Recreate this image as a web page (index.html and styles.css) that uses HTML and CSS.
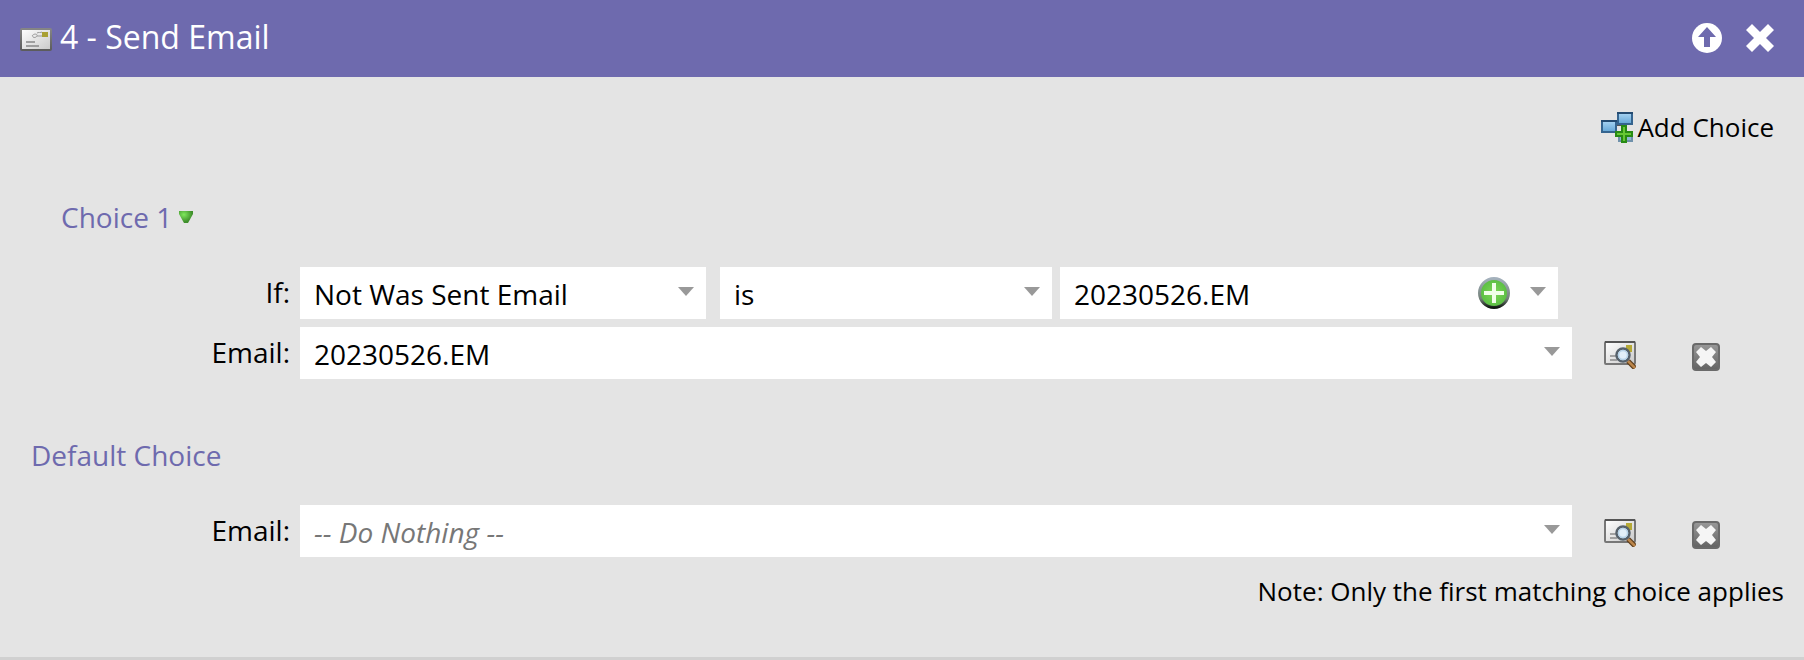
FILE: index.html
```html
<!DOCTYPE html>
<html lang="en">
<head>
  <meta charset="UTF-8" />
  <meta name="viewport" content="width=device-width, initial-scale=1.0"/>
  <title>Send Email</title>
  <link rel="stylesheet" href="styles.css">
</head>

<body>
  <!-- shared icons -->
  <svg class="defs" aria-hidden="true">
    <defs>
      <linearGradient id="paper" x1="0" y1="0" x2="1" y2="1">
        <stop offset="0" stop-color="#ffffff"/>
        <stop offset="1" stop-color="#c9c9c9"/>
      </linearGradient>
      <linearGradient id="frame" x1="0" y1="0" x2="0" y2="1">
        <stop offset="0" stop-color="#858585"/>
        <stop offset="1" stop-color="#5c5c5c"/>
      </linearGradient>
      <linearGradient id="steel" x1="0" y1="0" x2="0" y2="1">
        <stop offset="0" stop-color="#a4b1bc"/>
        <stop offset="0.7" stop-color="#738078"/>
        <stop offset="1" stop-color="#101810"/>
      </linearGradient>
      <linearGradient id="blue" x1="0" y1="0" x2="0" y2="1">
        <stop offset="0" stop-color="#a8d4f2"/>
        <stop offset="1" stop-color="#62a5d6"/>
      </linearGradient>
      <linearGradient id="box" x1="0" y1="0" x2="0" y2="1">
        <stop offset="0" stop-color="#999999"/>
        <stop offset="1" stop-color="#626262"/>
      </linearGradient>
      <radialGradient id="green" cx="0.5" cy="0.5" r="0.5">
        <stop offset="0" stop-color="#7fd757"/>
        <stop offset="1" stop-color="#58bd42"/>
      </radialGradient>
      <radialGradient id="gem" cx="0.35" cy="0.3" r="0.6">
        <stop offset="0" stop-color="#7fe85c"/>
        <stop offset="1" stop-color="#3f8f2b"/>
      </radialGradient>
    </defs>
    <symbol id="preview" viewBox="0 0 32 28">
      <rect x="1" y="1" width="30" height="22" rx="1" fill="url(#paper)" stroke="#777777" stroke-width="2"/>
      <path d="M1 1h30" stroke="#555555" stroke-width="2"/>
      <path d="M6 15h8M6 19h7" stroke="#8b8b8b" stroke-width="1.5"/>
      <rect x="22" y="4" width="6" height="7" fill="#b5a936"/>
      <path d="M24 20l7 7" stroke="#5c3d1c" stroke-width="5"/>
      <path d="M24 20l7 7" stroke="#bb854a" stroke-width="2.5"/>
      <circle cx="19" cy="14" r="6.5" fill="#e2eff9" stroke="#56616b" stroke-width="2.5"/>
      <circle cx="19" cy="14" r="4.5" fill="none" stroke="#b6d2e8" stroke-width="1.5"/>
    </symbol>
    <symbol id="remove" viewBox="0 0 28 28">
      <rect x="1" y="1" width="26" height="26" rx="3" fill="url(#box)" stroke="#6a6a6a" stroke-width="2"/>
      <path d="M4 9l5-5 5 4 5-4 5 5-4 5 4 5-5 5-5-4-5 4-5-5 4-5z" fill="#f5f5f5"/>
    </symbol>
    <symbol id="arrow" viewBox="0 0 16 9">
      <path d="M0 0h16L8 9z" fill="#999999"/>
    </symbol>
  </svg>

  <header class="titlebar">
    <svg class="mail" viewBox="0 0 32 24">
      <rect x="1" y="1" width="30" height="21" rx="1" fill="url(#paper)" stroke="url(#frame)" stroke-width="2"/>
      <rect x="22" y="4" width="6" height="5" fill="#a9a033"/>
      <path d="M12 8c2-3 6-2 5 0s-5 2-4 0M17 5c1-1 4 0 5-1M17 8h5" fill="none" stroke="#999999"/>
      <path d="M6 14h9M6 18h13" stroke="#888888" stroke-width="1.5"/>
    </svg>
    <h1>4 - Send Email</h1>
    <button type="button" class="icon-btn up" aria-label="Move up">
      <svg width="30" height="30" viewBox="0 0 30 30">
        <circle cx="15" cy="15" r="15" fill="#ffffff"/>
        <path d="M15 4l9 10h-6v10h-6V14H6z" fill="#6e6aae"/>
      </svg>
    </button>
    <button type="button" class="icon-btn" aria-label="Close">
      <svg width="28" height="28" viewBox="0 0 28 28">
        <path d="M0 6l6-6 8 8 8-8 6 6-8 8 8 8-6 6-8-8-8 8-6-6 8-8z" fill="#ffffff"/>
      </svg>
    </button>
  </header>

  <main class="step">
    <button type="button" class="add-choice">
      <svg width="32" height="32" viewBox="0 0 32 32">
        <rect x="18" y="21" width="13" height="9" fill="#8cb7d4" stroke="#6f91ab" stroke-width="2"/>
        <path d="M14 14h6" stroke="#555555" stroke-width="2"/>
        <rect x="17" y="2" width="14" height="11" fill="url(#blue)" stroke="#35648f" stroke-width="2"/>
        <rect x="1" y="10" width="14" height="11" fill="url(#blue)" stroke="#35648f" stroke-width="2"/>
        <path d="M16 2h16M0 10h16" stroke="#234a70" stroke-width="2"/>
        <path d="M20 14h6v6h6v6h-6v6h-6v-6h-6v-6h6z" fill="#278a14"/>
        <path d="M23 16v14M16 23h14" stroke="#66c834" stroke-width="2"/>
      </svg>
      Add Choice
    </button>

    <section class="choice">
      <h2 class="indent">
        <button type="button" class="choice-menu">Choice 1
          <svg width="14" height="12" viewBox="0 0 14 12"><path d="M0 0h14v3L9 12H5L0 3z" fill="url(#gem)"/></svg>
        </button>
      </h2>
      <div class="row">
        <label for="filter">If:</label>
        <div class="condition">
          <div class="field filter">
            <select id="filter"><option>Not Was Sent Email</option></select>
            <svg class="arrow"><use href="#arrow"/></svg>
          </div>
          <div class="field operator">
            <select aria-label="Operator"><option>is</option></select>
            <svg class="arrow"><use href="#arrow"/></svg>
          </div>
          <div class="field value">
            <select aria-label="Value"><option>20230526.EM</option></select>
            <button type="button" class="icon-btn plus" aria-label="Add value">
              <svg width="32" height="32" viewBox="0 0 32 32">
                <circle cx="16" cy="16" r="14.5" fill="url(#green)" stroke="url(#steel)" stroke-width="3"/>
                <path d="M16 6v20M6 16h20" stroke="#f1ffe9" stroke-width="4"/>
              </svg>
            </button>
            <svg class="arrow"><use href="#arrow"/></svg>
          </div>
        </div>
      </div>
      <div class="row">
        <label for="email1">Email:</label>
        <div class="field">
          <select id="email1"><option>20230526.EM</option></select>
          <svg class="arrow"><use href="#arrow"/></svg>
        </div>
        <div class="actions">
          <button type="button" class="icon-btn" aria-label="Preview email"><svg width="32" height="28"><use href="#preview"/></svg></button>
          <button type="button" class="icon-btn remove" aria-label="Remove email"><svg width="28" height="28"><use href="#remove"/></svg></button>
        </div>
      </div>
    </section>

    <section class="choice default">
      <h2>Default Choice</h2>
      <div class="row">
        <label for="email2">Email:</label>
        <div class="field">
          <select id="email2" class="empty"><option>-- Do Nothing --</option></select>
          <svg class="arrow"><use href="#arrow"/></svg>
        </div>
        <div class="actions">
          <button type="button" class="icon-btn" aria-label="Preview email"><svg width="32" height="28"><use href="#preview"/></svg></button>
          <button type="button" class="icon-btn remove" aria-label="Remove email"><svg width="28" height="28"><use href="#remove"/></svg></button>
        </div>
      </div>
    </section>

    <p class="note">Note: Only the first matching choice applies</p>
  </main>
</body>
</html>
```
FILE: styles.css
```css
* {
  box-sizing: border-box;
}
body {
  margin: 0;
  font-family: "Open Sans", "Noto Sans", sans-serif;
  font-size: 28px;
  line-height: 40px;
  color: #000;
  background-color: #e4e4e4;
}
svg {
  display: block;
  flex-shrink: 0;
}
button, select {
  font: inherit;
  color: inherit;
  border: none;
  cursor: pointer;
}
button {
  padding: 0;
  background: none;
}
.defs {
  position: absolute;
  width: 0;
  height: 0;
}
.titlebar {
  display: flex;
  align-items: center;
  height: 77px;
  padding: 0 30px 2px 20px;
  background-color: #6e6aae;
  color: #fff;
}
.titlebar h1 {
  flex: 1;
  margin: 0;
  padding-bottom: 2px;
  font-size: 32px;
  font-weight: normal;
}
.mail {
  width: 32px;
  height: 24px;
  margin: 4px 8px 0 0;
}
.up {
  margin-right: 24px;
}
.step {
  display: flex;
  flex-direction: column;
  padding-top: 30px;
  border-bottom: 3px solid #d0d0d0;
}
.add-choice {
  display: flex;
  align-items: center;
  gap: 4px;
  align-self: flex-end;
  margin-right: 30px;
  font-size: 26px;
}
.choice {
  padding-top: 50px;
}
.default {
  padding-top: 48px;
}
h2 {
  margin: 0 0 30px 31px;
  font-size: 28px;
  font-weight: normal;
  color: #6e6aae;
}
h2.indent {
  margin-left: 61px;
}
.choice-menu {
  display: flex;
  align-items: center;
  gap: 7px;
}
.row {
  display: flex;
  align-items: center;
  margin-bottom: 8px;
}
.row label {
  flex: 0 0 300px;
  padding: 0 10px 2px 0;
  text-align: right;
}
.field {
  position: relative;
  flex: 1;
}
.field select {
  display: block;
  width: 100%;
  height: 52px;
  padding: 1px 40px 0 14px;
  border-radius: 0;
  background-color: #fff;
  appearance: none;
}
.field .empty {
  color: #777;
  font-style: italic;
}
.arrow {
  position: absolute;
  top: 20px;
  right: 12px;
  width: 16px;
  height: 9px;
  pointer-events: none;
}
.condition {
  display: flex;
  flex: 1;
  margin-right: 246px;
}
.filter {
  flex: 406;
  margin-right: 14px;
}
.operator {
  flex: 332;
  margin-right: 8px;
}
.value {
  flex: 498;
}
.plus {
  position: absolute;
  top: 10px;
  right: 48px;
}
.actions {
  display: flex;
  align-items: center;
  flex: 0 0 232px;
  padding: 4px 0 0 32px;
}
.remove {
  margin: 4px 0 0 56px;
}
.note {
  margin: 6px 20px 46px;
  font-size: 26px;
  text-align: right;
}
```
